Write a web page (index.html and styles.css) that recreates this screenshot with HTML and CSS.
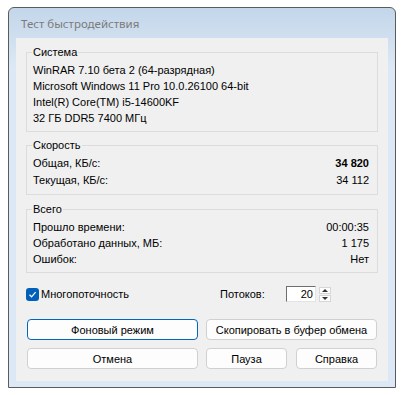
FILE: index.html
```html
<!DOCTYPE html>
<html lang="ru">
<head>
  <meta charset="UTF-8">
  <title>Тест быстродействия</title>
  <link rel="stylesheet" href="styles.css">
</head>
<body>
  <div class="window">
    <div class="title">Тест быстродействия</div>
    <div class="client">
      <fieldset class="group sys">
        <legend>Система</legend>
        <div class="row">WinRAR 7.10 бета 2 (64-разрядная)</div>
        <div class="row">Microsoft Windows 11 Pro 10.0.26100 64-bit</div>
        <div class="row">Intel(R) Core(TM) i5-14600KF</div>
        <div class="row">32 ГБ DDR5 7400 МГц</div>
      </fieldset>

      <fieldset class="group speed">
        <legend>Скорость</legend>
        <div class="row"><span>Общая, КБ/с:</span><b>34 820</b></div>
        <div class="row"><span>Текущая, КБ/с:</span><span>34 112</span></div>
      </fieldset>

      <fieldset class="group total">
        <legend>Всего</legend>
        <div class="row"><span>Прошло времени:</span><span>00:00:35</span></div>
        <div class="row"><span>Обработано данных, МБ:</span><span>1 175</span></div>
        <div class="row"><span>Ошибок:</span><span>Нет</span></div>
      </fieldset>

      <div class="options">
        <label class="check">
          <span class="box">
            <svg width="9" height="9" viewBox="0 0 9 9"><path d="M1.5 4.8 L3.6 6.8 L7.6 2.2" fill="none" stroke="#fff" stroke-width="1.2"/></svg>
          </span>
          Многопоточность
        </label>
        <span class="threads-label">Потоков:</span>
        <span class="spin">
          <span class="spin-value">20</span>
          <span class="spin-buttons">
            <span class="arrow up"></span>
            <span class="arrow down"></span>
          </span>
        </span>
      </div>

      <div class="buttons">
        <button class="btn default">Фоновый режим</button>
        <button class="btn">Скопировать в буфер обмена</button>
        <button class="btn">Отмена</button>
        <div class="pair">
          <button class="btn">Пауза</button>
          <button class="btn">Справка</button>
        </div>
      </div>
    </div>
  </div>
</body>
</html>
```

FILE: styles.css
```css
body {
  margin: 0;
  background: #fff;
  font-family: "Liberation Sans", Arial, sans-serif;
  font-size: 11px;
  color: #000;
}
.window {
  margin: 7px 0 0 8px;
  width: 388px;
  height: 381px;
  box-sizing: border-box;
  border: 1px solid #5b5b5b;
  border-radius: 6px 6px 0 0;
  background: linear-gradient(#c3d6ea, #dce8f5 60px);
  padding: 0 7px 6px;
}
.title {
  height: 30px;
  line-height: 31px;
  padding-left: 5px;
  font-family: "Noto Sans", sans-serif;
  font-size: 11.5px;
  color: #7b7b7b;
}
.client {
  height: 343px;
  box-sizing: border-box;
  background: #f0f0f0;
  padding: 6px 10px 0 10px;
}
.group {
  margin: 0;
  border: 1px solid #dcdcdc;
  padding: 2px 8px 5px 6px;
}
.group legend {
  padding: 0 1px;
  margin-left: -1px;
  line-height: 16px;
}
.row {
  display: flex;
  justify-content: space-between;
  line-height: 16px;
}
.speed {
  margin-top: 5px;
}
.speed .row {
  line-height: 17px;
}
.total {
  margin-top: 6px;
}
.options {
  display: flex;
  align-items: center;
  height: 18px;
  margin-top: 12px;
}
.check {
  display: flex;
  align-items: center;
  gap: 2px;
  width: 194px;
}
.box {
  width: 13px;
  height: 13px;
  border-radius: 3px;
  background: #005fb8;
  display: flex;
  align-items: center;
  justify-content: center;
}
.threads-label {
  width: 66px;
}
.spin {
  display: flex;
  align-items: center;
  gap: 3px;
}
.spin-value {
  width: 26px;
  height: 14px;
  line-height: 14px;
  box-sizing: content-box;
  background: #fff;
  border-top: 1px solid #6e6e6e;
  border-left: 1px solid #6e6e6e;
  border-right: 1px solid #e3e3e3;
  border-bottom: 1px solid #e3e3e3;
  text-align: right;
  padding-right: 2px;
}
.spin-buttons {
  display: flex;
  flex-direction: column;
  gap: 1px;
}
.arrow {
  width: 12px;
  height: 7px;
  background: #fdfdfd;
  border: 1px solid #d6d6d6;
  box-sizing: border-box;
  display: flex;
  align-items: center;
  justify-content: center;
}
.arrow::after {
  content: "";
  border-left: 3px solid transparent;
  border-right: 3px solid transparent;
}
.up::after {
  border-bottom: 3px solid #333;
}
.down::after {
  border-top: 3px solid #333;
}
.buttons {
  display: grid;
  grid-template-columns: 171px 171px;
  column-gap: 8px;
  row-gap: 8px;
  margin-top: 16px;
  padding-left: 1px;
}
.pair {
  display: grid;
  grid-template-columns: 81px 81px;
  column-gap: 9px;
}
.btn {
  height: 21px;
  font: inherit;
  color: #000;
  background: #fdfdfd;
  border: 1px solid #d0d0d0;
  border-radius: 4px;
  padding: 0;
}
.default {
  border-color: #0067c0;
}
```
